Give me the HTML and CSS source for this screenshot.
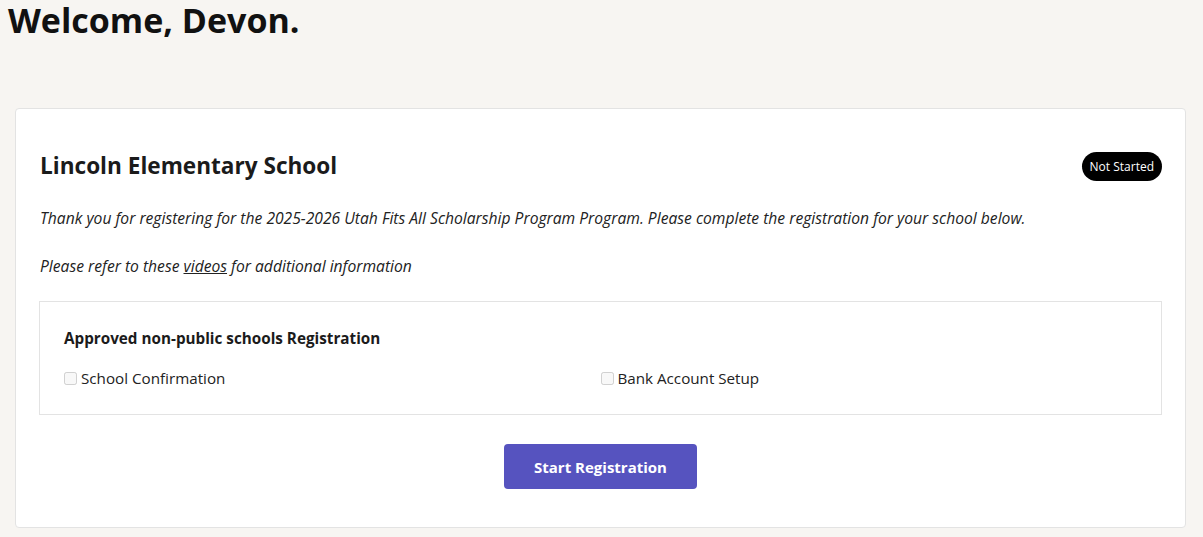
FILE: index.html
```html
<!DOCTYPE html>
<html lang="en">
<head>
<meta charset="utf-8">
<title>Welcome</title>
<link rel="stylesheet" href="styles.css">
</head>
<body>
<main class="page">
  <h1 class="welcome">Welcome, Devon.</h1>
  <section class="card">
    <header class="card-head">
      <h2 class="school">Lincoln Elementary School</h2>
      <span class="badge">Not Started</span>
    </header>
    <p class="note">Thank you for registering for the 2025-2026 Utah Fits All Scholarship Program Program. Please complete the registration for your school below.</p>
    <p class="note">Please refer to these <a href="#" class="link">videos</a> for additional information</p>
    <div class="steps">
      <h3 class="steps-title">Approved non-public schools Registration</h3>
      <div class="steps-grid">
        <label class="step"><input type="checkbox" disabled class="check"> School Confirmation</label>
        <label class="step"><input type="checkbox" disabled class="check"> Bank Account Setup</label>
      </div>
    </div>
    <div class="actions">
      <button class="btn">Start Registration</button>
    </div>
  </section>
</main>
</body>
</html>
```
FILE: styles.css
```css
* { box-sizing: border-box; }
html, body { margin: 0; padding: 0; }
body {
  background: #f7f5f2;
  color: #1b1b1b;
  font-family: "Open Sans", "Noto Sans", sans-serif;
  font-size: 16px;
}
.page {
  padding: 0 17px 10px 15px;
}
.welcome {
  margin: 0 0 0 -7px;
  padding-top: 2px;
  font-size: 34px;
  line-height: 36px;
  font-weight: 700;
  color: #111;
  height: 108px;
}
.card {
  background: #fff;
  border: 1px solid #e3e3e3;
  border-radius: 4px;
  padding: 40px 23px 38px 23px;
}
.card-head {
  display: flex;
  align-items: center;
  justify-content: space-between;
  margin-bottom: 24px;
}
.school {
  margin: 0 0 0 1px;
  font-size: 22.6px;
  line-height: 34px;
  font-weight: 700;
}
.badge {
  background: #000;
  color: #fff;
  font-size: 12px;
  line-height: 29px;
  height: 29px;
  padding: 0 8px;
  border-radius: 15px;
}
.note {
  margin: 0 0 26px 1px;
  font-style: italic;
  font-size: 15.65px;
  line-height: 22px;
  color: #222;
}
.link { color: #222; text-decoration: underline; }
.steps {
  border: 1px solid #e3e3e3;
  padding: 25px 24px 25px 24px;
  margin-top: -2px;
}
.steps-title {
  margin: 0 0 18px 0;
  font-size: 15.25px;
  line-height: 22px;
  font-weight: 700;
}
.steps-grid {
  display: grid;
  grid-template-columns: 1fr 1fr;
}
.step {
  display: flex;
  align-items: center;
  gap: 4px;
  font-size: 15.2px;
  line-height: 22px;
  color: #222;
}
.check {
  margin: 0;
  width: 13px;
  height: 13px;
}
.actions {
  display: flex;
  justify-content: center;
  margin-top: 29px;
}
.btn {
  background: #5653bf;
  color: #fff;
  border: none;
  border-radius: 4px;
  width: 193px;
  height: 45px;
  font-family: inherit;
  font-size: 15px;
  font-weight: 700;
}
```
